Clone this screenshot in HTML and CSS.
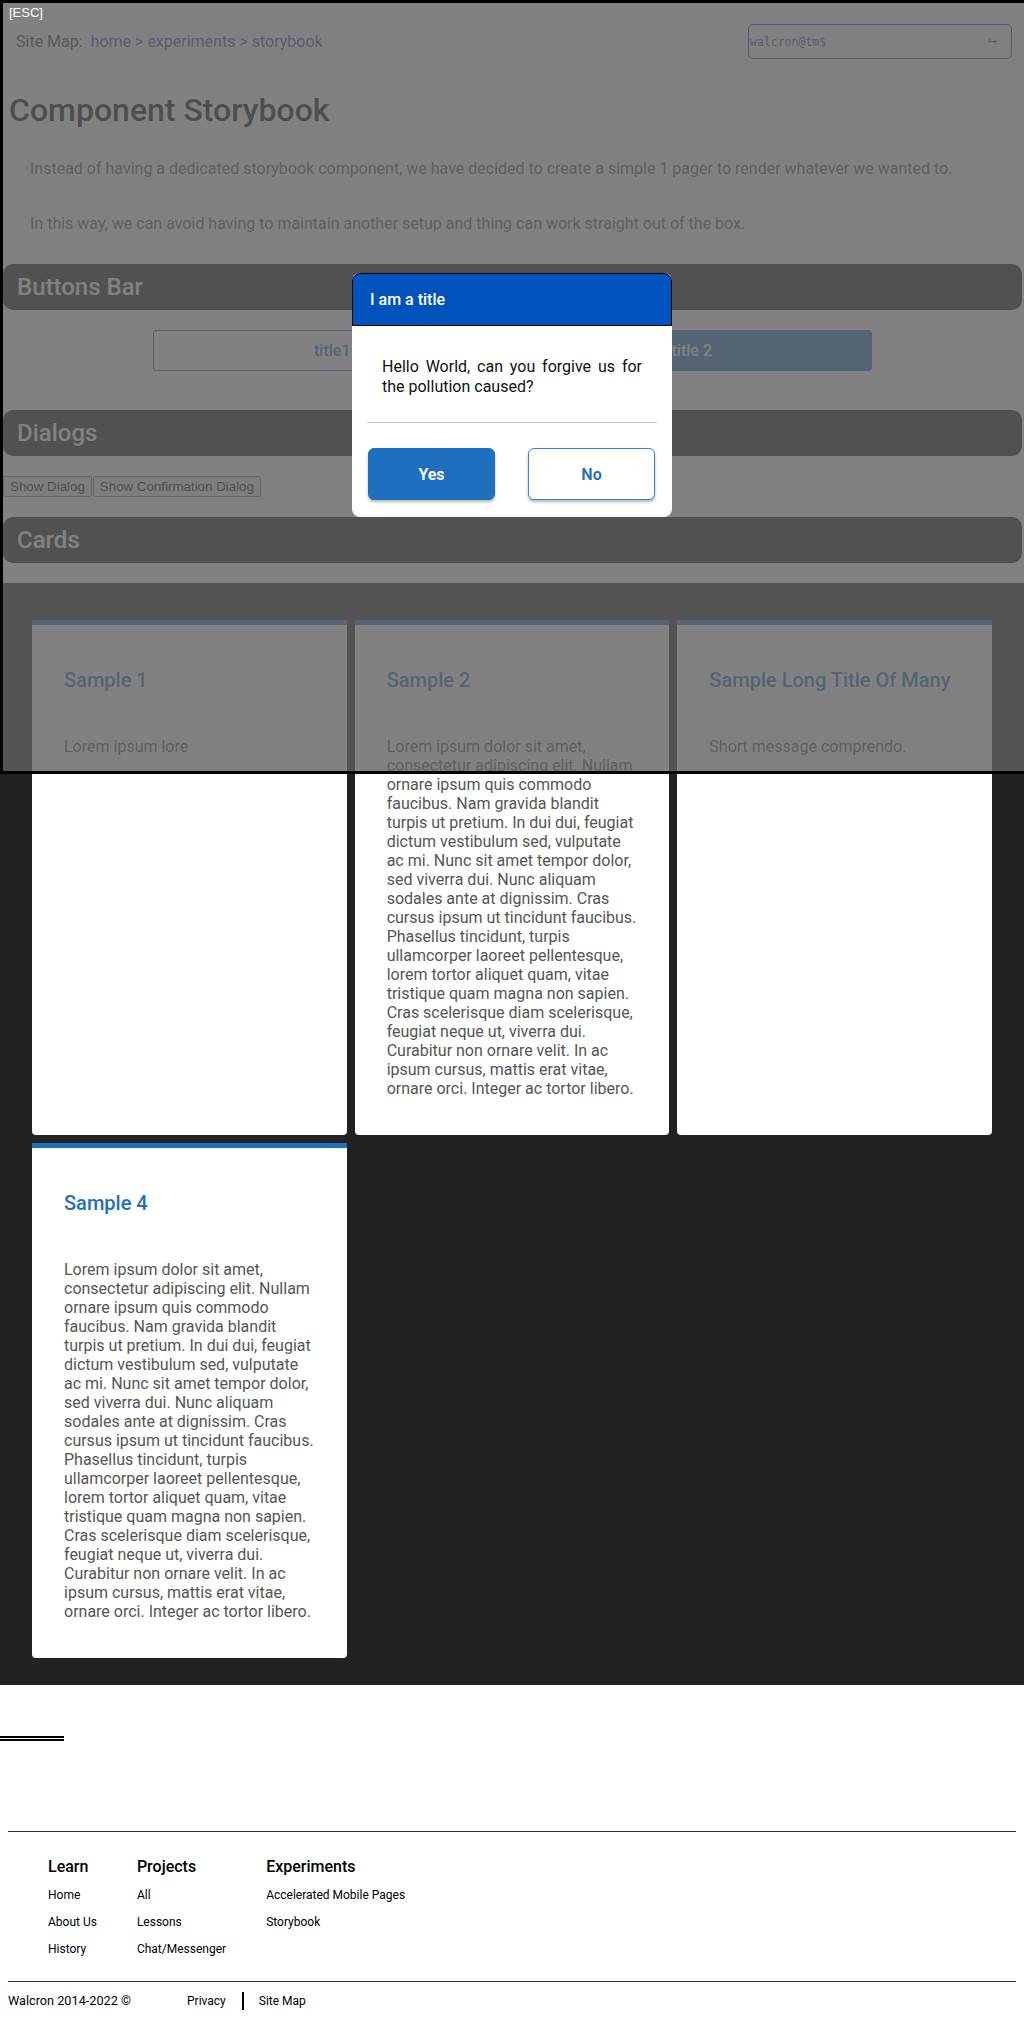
FILE: index.html
```html
<!DOCTYPE html>
<html lang="en">
<head>
<meta charset="utf-8">
<title>Component Storybook</title>
<link rel="stylesheet" href="styles.css">
</head>
<body>
<div class="page">
  <header class="topbar">
    <div class="sitemap">Site Map:<span class="crumbs"><a href="#">home</a> &gt; <a href="#">experiments</a> &gt; <a href="#">storybook</a></span></div>
    <div class="terminal"><span class="prompt">walcron@tm$</span><span class="enter">&#8618;</span></div>
  </header>
  <main>
    <h1 class="title">Component Storybook</h1>
    <p class="intro">Instead of having a dedicated storybook component, we have decided to create a simple 1 pager to render whatever we wanted to.</p>
    <p class="intro last">In this way, we can avoid having to maintain another setup and thing can work straight out of the box.</p>

    <h2 class="bar">Buttons Bar</h2>
    <div class="btnbar">
      <button class="tbtn outline">title1</button>
      <button class="tbtn filled">title 2</button>
    </div>

    <h2 class="bar">Dialogs</h2>
    <div class="dlgbtns"><button class="plain">Show Dialog</button><button class="plain">Show Confirmation Dialog</button></div>

    <h2 class="bar">Cards</h2>
    <div class="cards">
      <div class="card">
        <h3 class="card-title">Sample 1</h3>
        <p class="card-text">Lorem ipsum lore</p>
      </div>
      <div class="card">
        <h3 class="card-title">Sample 2</h3>
        <p class="card-text">Lorem ipsum dolor sit amet, consectetur adipiscing elit. Nullam ornare ipsum quis commodo faucibus. Nam gravida blandit turpis ut pretium. In dui dui, feugiat dictum vestibulum sed, vulputate ac mi. Nunc sit amet tempor dolor, sed viverra dui. Nunc aliquam sodales ante at dignissim. Cras cursus ipsum ut tincidunt faucibus. Phasellus tincidunt, turpis ullamcorper laoreet pellentesque, lorem tortor aliquet quam, vitae tristique quam magna non sapien. Cras scelerisque diam scelerisque, feugiat neque ut, viverra dui. Curabitur non ornare velit. In ac ipsum cursus, mattis erat vitae, ornare orci. Integer ac tortor libero.</p>
      </div>
      <div class="card">
        <h3 class="card-title">Sample Long Title Of Many</h3>
        <p class="card-text">Short message comprendo.</p>
      </div>
      <div class="card">
        <h3 class="card-title">Sample 4</h3>
        <p class="card-text">Lorem ipsum dolor sit amet, consectetur adipiscing elit. Nullam ornare ipsum quis commodo faucibus. Nam gravida blandit turpis ut pretium. In dui dui, feugiat dictum vestibulum sed, vulputate ac mi. Nunc sit amet tempor dolor, sed viverra dui. Nunc aliquam sodales ante at dignissim. Cras cursus ipsum ut tincidunt faucibus. Phasellus tincidunt, turpis ullamcorper laoreet pellentesque, lorem tortor aliquet quam, vitae tristique quam magna non sapien. Cras scelerisque diam scelerisque, feugiat neque ut, viverra dui. Curabitur non ornare velit. In ac ipsum cursus, mattis erat vitae, ornare orci. Integer ac tortor libero.</p>
      </div>
    </div>
  </main>

  <div class="dbl"></div>

  <footer class="footer">
    <div class="fcols">
      <div class="fcol">
        <h4 class="fhead">Learn</h4>
        <a href="#" class="flink">Home</a>
        <a href="#" class="flink">About Us</a>
        <a href="#" class="flink">History</a>
      </div>
      <div class="fcol">
        <h4 class="fhead">Projects</h4>
        <a href="#" class="flink">All</a>
        <a href="#" class="flink">Lessons</a>
        <a href="#" class="flink">Chat/Messenger</a>
      </div>
      <div class="fcol">
        <h4 class="fhead">Experiments</h4>
        <a href="#" class="flink">Accelerated Mobile Pages</a>
        <a href="#" class="flink">Storybook</a>
      </div>
    </div>
    <div class="fbottom">
      <span class="copy">Walcron 2014-2022 &copy;</span>
      <a href="#" class="blink privacy">Privacy</a>
      <a href="#" class="blink smap">Site Map</a>
    </div>
  </footer>
</div>

<div class="overlay"><span class="esc">[ESC]</span></div>

<div class="dialog">
  <div class="dlg-title">I am a title</div>
  <div class="dlg-body">Hello World, can you forgive us for the pollution caused?</div>
  <div class="dlg-hr"></div>
  <div class="dlg-actions">
    <button class="dbtn yes">Yes</button>
    <button class="dbtn no">No</button>
  </div>
</div>
</body>
</html>
```

FILE: styles.css
```css
html, body {
  margin: 0;
  padding: 0;
}
body {
  width: 1024px;
  background: #fff;
  font-family: Roboto, "Liberation Sans", Arial, sans-serif;
  color: #000;
  position: relative;
}

.topbar {
  display: flex;
  align-items: center;
  justify-content: space-between;
  height: 35px;
  margin-top: 24px;
  padding: 0 12px 0 16px;
}
.sitemap {
  font-size: 16px;
  color: #333;
}
.crumbs {
  margin-left: 8px;
  color: #3f3fc8;
}
.crumbs a {
  color: #3f3fc8;
  text-decoration: none;
}
.terminal {
  box-sizing: border-box;
  width: 264px;
  height: 35px;
  border: 1px solid #3f48c0;
  border-radius: 5px;
  display: flex;
  align-items: center;
  justify-content: space-between;
  padding: 0 14px 0 1px;
  font-family: "DejaVu Sans Mono", "Liberation Mono", monospace;
  font-size: 11.5px;
  color: #3f48c0;
}
.enter {
  font-family: "DejaVu Sans", sans-serif;
  font-size: 11px;
}

.title {
  margin: 32px 0 30px 9px;
  font-size: 32px;
  line-height: 38px;
  font-weight: 500;
  color: #000;
}
.intro {
  margin: 0 0 36px 30px;
  font-size: 16px;
  line-height: 19px;
  color: #555;
}
.intro.last {
  margin-bottom: 31px;
}

.bar {
  height: 46px;
  margin: 0 2px 20px 3px;
  padding-left: 14px;
  border-radius: 10px;
  background: #111;
  color: #fff;
  font-size: 24px;
  line-height: 46px;
  font-weight: 500;
}

.btnbar {
  display: flex;
  justify-content: center;
  margin: 0 0 39px;
}
.tbtn {
  width: 359.5px;
  height: 41px;
  border: 1px solid #1f6fbf;
  border-radius: 3px;
  font-family: Roboto, sans-serif;
  font-size: 16px;
  font-weight: 500;
  cursor: pointer;
}
.outline {
  background: transparent;
  color: #1f6fbf;
}
.filled {
  background: #1f6fbf;
  color: #fff;
}

.dlgbtns {
  display: flex;
  gap: 1px;
  margin: 0 0 20px 3px;
}
.plain {
  height: 21px;
  padding: 1px 6px;
  border: 1px solid #767676;
  border-radius: 2px;
  background: #efefef;
  color: #000;
  font-family: "Liberation Sans", Arial, sans-serif;
  font-size: 13.333px;
}

.cards {
  display: grid;
  grid-template-columns: repeat(3, 1fr);
  gap: 8px;
  padding: 37px 32px 27px;
  background: #222;
}
.card {
  background: #fff;
  border-top: 5px solid #1f6fbf;
  border-radius: 0 0 4px 4px;
  padding: 32px 28px 37px 32px;
}
.card-title {
  margin: 11px 0 0;
  font-size: 20px;
  line-height: 24px;
  font-weight: 500;
  color: #1f6fbf;
}
.card-text {
  margin: 45px 0 0;
  font-size: 16px;
  line-height: 19px;
  color: #555;
}

.dbl {
  width: 64px;
  height: 1px;
  margin-top: 51px;
  border-top: 2px solid #000;
  border-bottom: 2px solid #000;
}

.footer {
  margin: 90px 8px 0;
  border-top: 1px solid #333;
}
.fcols {
  display: flex;
  gap: 40px;
  padding: 25px 0 25px 40px;
}
.fcol {
  display: flex;
  flex-direction: column;
}
.fhead {
  margin: 0;
  font-size: 16px;
  line-height: 19px;
  font-weight: 500;
  color: #000;
}
.flink {
  display: block;
  margin-top: 13px;
  font-size: 12px;
  line-height: 14px;
  color: #000;
  text-decoration: none;
}
.fhead + .flink {
  margin-top: 12px;
}
.fbottom {
  display: flex;
  align-items: center;
  border-top: 1px solid #333;
  padding: 10px 0 15px;
  font-size: 12px;
  line-height: 18px;
}
.copy {
  width: 179px;
  font-size: 12.7px;
}
.blink {
  color: #000;
  text-decoration: none;
}
.privacy {
  padding-right: 16px;
}
.smap {
  border-left: 2px solid #000;
  padding-left: 15px;
}

.overlay {
  position: absolute;
  top: 0;
  left: 0;
  width: 1021px;
  height: 768px;
  border: 3px solid #000;
  border-right: 0;
  background: rgba(97, 97, 97, 0.8);
  z-index: 2;
}
.esc {
  display: block;
  padding: 2px 6px;
  color: #fff;
  font-family: "Liberation Sans", Arial, sans-serif;
  font-size: 13px;
  line-height: 15px;
}

.dialog {
  position: absolute;
  top: 273px;
  left: 352px;
  width: 320px;
  background: #fff;
  border-radius: 8px;
  z-index: 3;
}
.dlg-title {
  background: #0052bd;
  border: 1px solid #000;
  border-radius: 8px 8px 0 0;
  padding: 16px 17px;
  color: #fff;
  font-size: 16px;
  line-height: 19px;
  font-weight: 500;
}
.dlg-body {
  padding: 31px 30px 0;
  text-align: justify;
  font-size: 16px;
  line-height: 20px;
  color: #111;
}
.dlg-hr {
  margin: 25px 15px 0;
  border-top: 1px solid #c4c4c4;
}
.dlg-actions {
  display: flex;
  justify-content: space-between;
  padding: 25px 17px 17px 16px;
}
.dbtn {
  width: 127px;
  height: 52px;
  border-radius: 6px;
  font-family: Roboto, sans-serif;
  font-size: 16px;
  font-weight: 600;
  box-shadow: 0 2px 3px rgba(0, 0, 0, 0.3);
  cursor: pointer;
}
.yes {
  background: #1f6fbf;
  border: 1px solid #1f6fbf;
  color: #fff;
}
.no {
  background: #fff;
  border: 1px solid #3a82cf;
  color: #1f6fbf;
}
```
